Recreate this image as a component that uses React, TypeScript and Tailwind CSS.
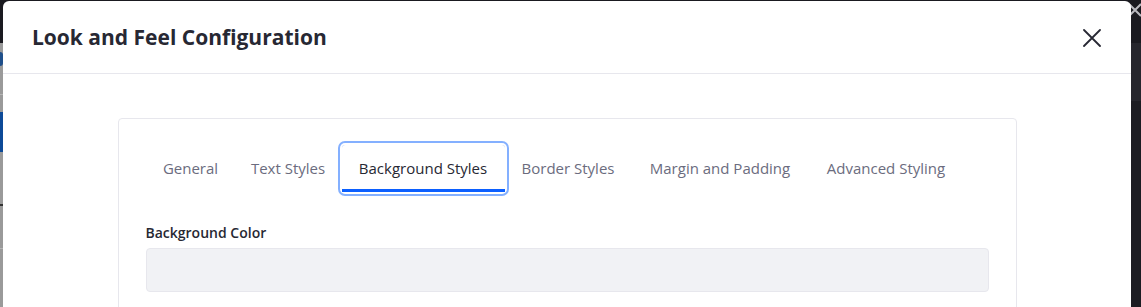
import React from "react";

const tabs = [
  { label: "General", w: "w-[88px]" },
  { label: "Text Styles", w: "w-[107px]" },
  { label: "Background Styles", w: "w-[163px]", active: true },
  { label: "Border Styles", w: "w-[127px]" },
  { label: "Margin and Padding", w: "w-[177px]" },
  { label: "Advanced Styling", w: "w-[155px]" },
];

export default function App() {
  return (
    <div
      className="relative h-[307px] w-[1141px] overflow-hidden bg-[#1c1c22]"
      style={{ fontFamily: '"Open Sans", "Noto Sans", sans-serif' }}
    >
      {/* backdrop page */}
      <div className="flex h-full flex-col">
        <div className="h-[43px] bg-[#1a1a20]" />
        <div className="flex flex-1">
          <div className="flex w-[3px] flex-col bg-[#9a9a9a]">
            <div className="mt-[9px] h-[14px] rounded-r-full bg-[#1f4f8a]" />
            <div className="mt-[28px] h-px bg-[#b5b5b5]" />
            <div className="mt-[17px] h-[40px] bg-[#0d4a98]" />
            <div className="mt-[52px] h-[2px] bg-[#333]" />
            <div className="mt-[42px] h-px bg-[#b5b5b5]" />
          </div>
          <div className="flex-1" />
          <div className="flex w-[10px] flex-col">
            <div className="h-[58px] bg-[#26262d]" />
          </div>
        </div>
      </div>

      {/* backdrop close icon */}
      <svg
        className="absolute left-[1127px] top-[3px]"
        width="16"
        height="14"
        viewBox="0 0 16 14"
      >
        <path d="M2 1 L14 13 M14 1 L2 13" stroke="#b9b9bf" strokeWidth="2" />
      </svg>

      {/* modal */}
      <div className="absolute bottom-[-20px] left-[3px] top-[1px] w-[1128px] rounded-[6px] bg-white">
        <div className="flex h-[73px] items-center justify-between border-b border-[#e7e7ed] pl-[29px] pr-[30px]">
          <h1 className="text-[21px] font-bold leading-none text-[#272833]">
            Look and Feel Configuration
          </h1>
          <svg width="18" height="18" viewBox="0 0 18 18" className="mt-[1px]">
            <path
              d="M1 1 L17 17 M17 1 L1 17"
              stroke="#272833"
              strokeWidth="1.8"
              strokeLinecap="round"
            />
          </svg>
        </div>
        <div className="pt-[44px]">
          <div className="mx-auto w-[899px] rounded-[4px] border border-[#e7e7ed] px-[27px] pt-[26px] pb-[30px]">
            <div className="flex pl-px">
              {tabs.map((t) => (
                <div
                  key={t.label}
                  className={
                    t.active
                      ? `${t.w} relative flex h-[47px] items-center justify-center rounded-[3px] text-[15px] text-[#272833] shadow-[0_0_0_2px_#ffffff,0_0_0_4px_#84b0ff]`
                      : `${t.w} flex h-[47px] items-center justify-center text-[15px] text-[#6b6c7e]`
                  }
                >
                  {t.label}
                  {t.active && (
                    <div className="absolute bottom-0 left-0 right-0 h-[3px] bg-[#0b5fff]" />
                  )}
                </div>
              ))}
            </div>
            <div className="mt-[31px] text-[14px] font-semibold leading-[20px] text-[#272833]">
              Background Color
            </div>
            <div className="mt-[5px] h-[44px] rounded-[4px] border border-[#e7e7ed] bg-[#f1f2f5]" />
          </div>
        </div>
      </div>
    </div>
  );
}
